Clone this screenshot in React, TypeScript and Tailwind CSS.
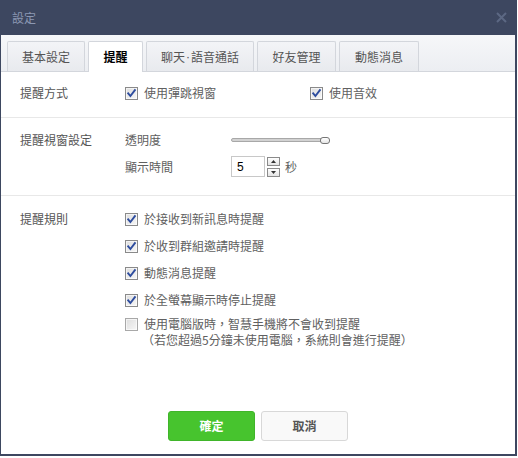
import React from "react";

const font = "font-['Noto_Sans_CJK_TC','Noto_Sans_CJK_SC',sans-serif]";

function Check({ checked = true }: { checked?: boolean }) {
  return (
    <svg width="13" height="13" viewBox="0 0 13 13" className="shrink-0">
      <defs>
        <linearGradient id={checked ? "cbg1" : "cbg2"} x1="0" y1="0" x2="1" y2="1">
          <stop offset="0" stopColor="#dcdcdc" />
          <stop offset="1" stopColor="#f8f8f8" />
        </linearGradient>
      </defs>
      <rect x="0.5" y="0.5" width="12" height="12" fill={`url(#${checked ? "cbg1" : "cbg2"})`} stroke={checked ? "#8a8a8a" : "#a8a8a8"} />
      <rect x="1.5" y="1.5" width="10" height="10" fill="none" stroke="#ffffff" strokeOpacity="0.6" />
      {checked && (
        <path d="M3.2 6.4 L5.4 9 L9.9 3.2" fill="none" stroke="#2d4c9e" strokeWidth="1.9" strokeLinecap="square" />
      )}
    </svg>
  );
}

function Option({ label, checked = true }: { label: string; checked?: boolean }) {
  return (
    <div className="flex items-center h-[20px] gap-[6px]">
      <Check checked={checked} />
      <span className="text-[12px] text-[#606060] leading-[20px] whitespace-nowrap">{label}</span>
    </div>
  );
}

export default function App() {
  const tabs: { label: React.ReactNode; key: string; w: string; active?: boolean }[] = [
    { key: "a", label: "基本設定", w: "w-[78px]" },
    { key: "b", label: "提醒", w: "w-[55px]", active: true },
    {
      key: "c",
      label: (
        <>
          聊天<span className="font-['Liberation_Sans',sans-serif] mx-[1px]">·</span>語音通話
        </>
      ),
      w: "w-[108px]",
    },
    { key: "d", label: "好友管理", w: "w-[79px]" },
    { key: "e", label: "動態消息", w: "w-[80px]" },
  ];
  return (
    <div className={`w-[518px] h-[458px] bg-white ${font}`}>
      <div className="w-[517px] h-[456px] flex flex-col border-l border-r-2 border-b-2 border-[#3d4760]">
        {/* title bar */}
        <div className="h-[35px] shrink-0 bg-[#3d4760] flex items-center justify-between pl-[11px] pr-[8px]">
          <span className="text-[12px] text-[#8c98b3] leading-none">設定</span>
          <svg width="11" height="11" viewBox="0 0 11 11">
            <path d="M1 1 L10 10 M10 1 L1 10" stroke="#5c6883" strokeWidth="2" />
          </svg>
        </div>
        {/* tab bar */}
        <div className="h-[37px] shrink-0 bg-gradient-to-b from-[#f6f7f9] to-[#eceef2] border-b border-[#d3d6dc] flex items-end gap-[3px] pl-[6px]">
          {tabs.map((t) =>
            t.active ? (
              <div
                key={t.key}
                className={`${t.w} h-[31px] -mb-px bg-white border border-b-0 border-[#d3d6dc] rounded-t-[2px] flex items-center justify-center text-[12px] font-bold text-black`}
              >
                {t.label}
              </div>
            ) : (
              <div
                key={t.key}
                className={`${t.w} h-[30px] bg-gradient-to-b from-[#f3f4f7] to-[#e8eaee] border border-b-0 border-[#d3d6dc] rounded-t-[2px] flex items-center justify-center text-[12px] text-[#555]`}
              >
                {t.label}
              </div>
            )
          )}
        </div>
        {/* section 1 */}
        <div className="h-[46px] shrink-0 border-b border-[#e8e8e8] flex items-start pt-[11px] pl-[19px]">
          <div className="w-[105px] h-[20px] leading-[20px] text-[12px] text-[#555]">提醒方式</div>
          <div className="w-[185px]">
            <Option label="使用彈跳視窗" />
          </div>
          <Option label="使用音效" />
        </div>
        {/* section 2 */}
        <div className="shrink-0 border-b border-[#e8e8e8] flex items-start pt-[12px] pb-[18px] pl-[19px]">
          <div className="w-[105px] h-[20px] leading-[20px] text-[12px] text-[#555]">提醒視窗設定</div>
          <div className="flex flex-col gap-[6px]">
            <div className="flex items-center h-[20px]">
              <div className="w-[106px] text-[12px] text-[#606060]">透明度</div>
              <div className="relative w-[98px] h-[20px] flex items-center">
                <div className="w-[94px] h-[4px] bg-[#d2d2d2] border border-[#a8a8a8] rounded-[2px]" />
                <div className="absolute left-[89px] top-[7px] w-[10px] h-[7px] bg-gradient-to-b from-white to-[#e6e6e6] border border-[#767676] rounded-[3px]" />
              </div>
            </div>
            <div className="flex items-center h-[21px]">
              <div className="w-[106px] text-[12px] text-[#606060]">顯示時間</div>
              <div className="w-[34px] h-[21px] border border-[#c8c8c8] bg-white flex items-center pl-[5px] text-[12px] text-black font-['Liberation_Sans',sans-serif]">
                5
              </div>
              <div className="ml-[2px] flex flex-col gap-[2px]">
                <div className="w-[13px] h-[9px] border border-[#8a8a8a] bg-gradient-to-b from-white to-[#e4e4e4] flex items-center justify-center">
                  <svg width="5" height="3" viewBox="0 0 5 3">
                    <path d="M0 3 L2.5 0 L5 3 Z" fill="#333" />
                  </svg>
                </div>
                <div className="w-[13px] h-[9px] border border-[#8a8a8a] bg-gradient-to-b from-white to-[#e4e4e4] flex items-center justify-center">
                  <svg width="5" height="3" viewBox="0 0 5 3">
                    <path d="M0 0 L5 0 L2.5 3 Z" fill="#333" />
                  </svg>
                </div>
              </div>
              <span className="ml-[5px] text-[12px] text-[#606060]">秒</span>
            </div>
          </div>
        </div>
        {/* section 3 */}
        <div className="shrink-0 flex items-start pt-[13px] pl-[19px]">
          <div className="w-[105px] h-[20px] leading-[20px] text-[12px] text-[#555]">提醒規則</div>
          <div className="flex flex-col gap-[7px]">
            <Option label="於接收到新訊息時提醒" />
            <Option label="於收到群組邀請時提醒" />
            <Option label="動態消息提醒" />
            <Option label="於全螢幕顯示時停止提醒" />
            <div className="flex items-start gap-[6px] -mt-[1px]">
              <div className="h-[16px] flex items-center">
                <Check checked={false} />
              </div>
              <div className="text-[12px] text-[#606060] leading-[16px] whitespace-nowrap">
                <div>使用電腦版時，智慧手機將不會收到提醒</div>
                <div className="-ml-[2px]">（若您超過5分鐘未使用電腦，系統則會進行提醒）</div>
              </div>
            </div>
          </div>
        </div>
        {/* buttons */}
        <div className="mt-auto pb-[13px] flex justify-center gap-[6px]">
          <button className="w-[87px] h-[30px] rounded-[3px] bg-[#47c42e] border border-[#40b52a] text-white text-[12px] font-bold">
            確定
          </button>
          <button className="w-[87px] h-[30px] rounded-[3px] bg-[#f9f9f9] border border-[#d8d8d8] text-[#555] text-[12px] font-bold">
            取消
          </button>
        </div>
      </div>
    </div>
  );
}
